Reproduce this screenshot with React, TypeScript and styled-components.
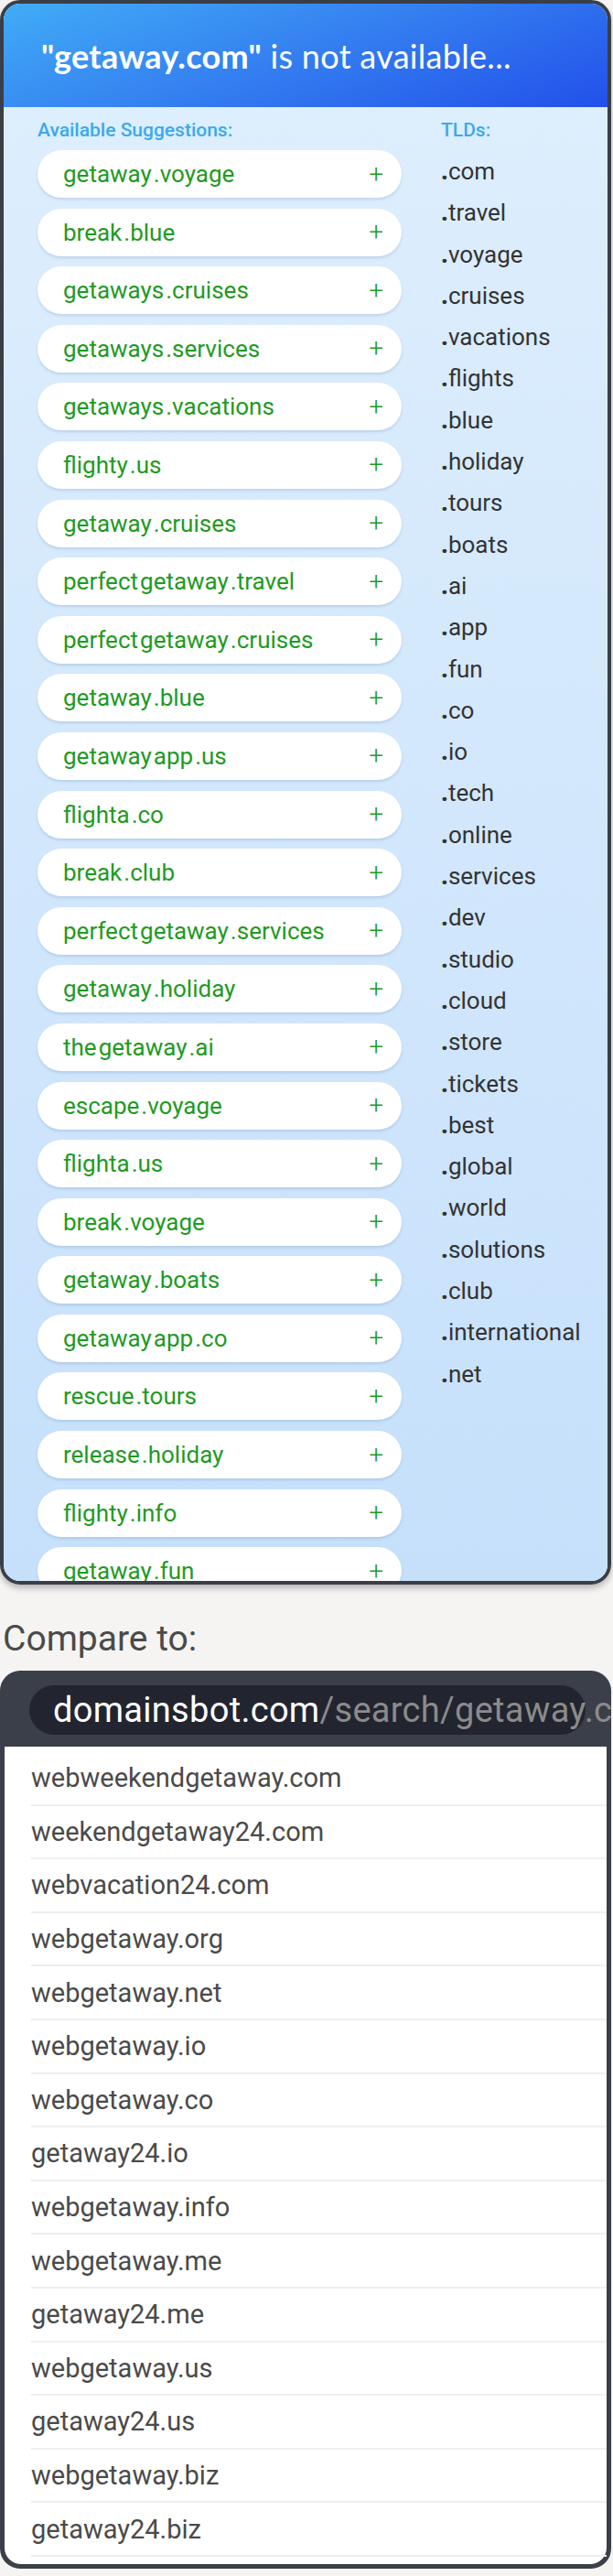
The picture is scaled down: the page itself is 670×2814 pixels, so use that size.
import React from 'react';
import styled, { createGlobalStyle } from 'styled-components';

const suggestions: string[][] = [
  ['getaway', '.voyage'],
  ['break', '.blue'],
  ['getaways', '.cruises'],
  ['getaways', '.services'],
  ['getaways', '.vacations'],
  ['flighty', '.us'],
  ['getaway', '.cruises'],
  ['perfect', 'getaway', '.travel'],
  ['perfect', 'getaway', '.cruises'],
  ['getaway', '.blue'],
  ['getaway', 'app', '.us'],
  ['flighta', '.co'],
  ['break', '.club'],
  ['perfect', 'getaway', '.services'],
  ['getaway', '.holiday'],
  ['the', 'getaway', '.ai'],
  ['escape', '.voyage'],
  ['flighta', '.us'],
  ['break', '.voyage'],
  ['getaway', '.boats'],
  ['getaway', 'app', '.co'],
  ['rescue', '.tours'],
  ['release', '.holiday'],
  ['flighty', '.info'],
  ['getaway', '.fun'],
];

const tlds = [
  'com', 'travel', 'voyage', 'cruises', 'vacations', 'flights', 'blue', 'holiday',
  'tours', 'boats', 'ai', 'app', 'fun', 'co', 'io', 'tech', 'online', 'services',
  'dev', 'studio', 'cloud', 'store', 'tickets', 'best', 'global', 'world',
  'solutions', 'club', 'international', 'net',
];

const competitors = [
  'webweekendgetaway.com',
  'weekendgetaway24.com',
  'webvacation24.com',
  'webgetaway.org',
  'webgetaway.net',
  'webgetaway.io',
  'webgetaway.co',
  'getaway24.io',
  'webgetaway.info',
  'webgetaway.me',
  'getaway24.me',
  'webgetaway.us',
  'getaway24.us',
  'webgetaway.biz',
  'getaway24.biz',
];

const GlobalStyle = createGlobalStyle`
  body {
    margin: 0;
    background: #f5f4f2;
    font-family: Roboto, 'Liberation Sans', sans-serif;
  }
`;

export default function App() {
  return (
    <>
      <GlobalStyle />
      <Page>
        <ResultCard>
          <Header>
            <HeaderTitle>
              <strong>"getaway.com"</strong> is not available...
            </HeaderTitle>
          </Header>
          <Body>
            <Column>
              <SectionLabel>Available Suggestions:</SectionLabel>
              <PillList>
                {suggestions.map((parts) => (
                  <Pill key={parts.join('')}>
                    <PillName>
                      {parts.map((p) => (
                        <span key={p}>{p}</span>
                      ))}
                    </PillName>
                    <Plus>+</Plus>
                  </Pill>
                ))}
              </PillList>
            </Column>
            <Column>
              <SectionLabel>TLDs:</SectionLabel>
              <TldList>
                {tlds.map((t) => (
                  <Tld key={t}>
                    <Dot>.</Dot>
                    {t}
                  </Tld>
                ))}
              </TldList>
            </Column>
          </Body>
        </ResultCard>

        <CompareTitle>Compare to:</CompareTitle>

        <BrowserCard>
          <AddressBar>
            <Host>domainsbot.com</Host>
            <PathPart>/search/getaway.com</PathPart>
          </AddressBar>
          <ResultList>
            {competitors.map((c) => (
              <ResultRow key={c}>{c}</ResultRow>
            ))}
          </ResultList>
        </BrowserCard>
      </Page>
    </>
  );
}

const Page = styled.div`
  width: 670px;
  padding-bottom: 6px;
`;

const ResultCard = styled.div`
  width: 668px;
  box-sizing: border-box;
  border: 4px solid #3a3f47;
  border-radius: 22px;
  overflow: hidden;
  box-shadow: 0 4px 6px rgba(0, 0, 0, 0.25);
`;

const Header = styled.div`
  height: 113px;
  display: flex;
  align-items: center;
  padding-left: 41px;
  background: linear-gradient(160deg, #41acf6 0%, #347ef0 50%, #2250ea 100%);
`;

const HeaderTitle = styled.div`
  color: #fff;
  font-family: Lato, 'Open Sans', sans-serif;
  font-size: 36px;
  font-weight: 400;
  letter-spacing: 0.3px;

  strong {
    font-weight: 700;
  }
`;

const Body = styled.div`
  height: 1610px;
  overflow: hidden;
  display: grid;
  grid-template-columns: 398px 1fr;
  column-gap: 43px;
  padding: 14px 0 0 37px;
  box-sizing: border-box;
  background: linear-gradient(180deg, #ddeefd 0%, #c6e0fb 100%);
`;

const Column = styled.div`
  display: flex;
  flex-direction: column;
`;

const SectionLabel = styled.div`
  color: #3aa9f0;
  font-size: 21px;
  font-weight: 500;
  line-height: 22px;
  margin-bottom: 11px;
`;

const PillList = styled.div`
  display: flex;
  flex-direction: column;
  gap: 11.6px;
`;

const Pill = styled.div`
  height: 52px;
  flex-shrink: 0;
  display: flex;
  align-items: center;
  justify-content: space-between;
  padding: 0 20px 0 28px;
  background: #fff;
  border-radius: 26px;
  box-shadow: 0 2px 3px rgba(60, 100, 150, 0.18);
  color: #1f9a1f;
`;

const PillName = styled.div`
  display: flex;
  gap: 2px;
  font-size: 26px;
`;

const Plus = styled.span`
  font-size: 28px;
  font-weight: 300;
`;

const TldList = styled.div`
  display: flex;
  flex-direction: column;
  padding-top: 1px;
`;

const Tld = styled.div`
  font-size: 26px;
  line-height: 45.3px;
  color: #333;
`;

const Dot = styled.span`
  font-weight: 900;
`;

const CompareTitle = styled.div`
  margin: 36px 0 12px 3px;
  font-size: 39px;
  line-height: 46px;
  color: #4a4a4a;
`;

const BrowserCard = styled.div`
  width: 668px;
  box-sizing: border-box;
  background: #3a3f4a;
  border-radius: 22px;
  overflow: hidden;
  padding: 16px 5px 5px 5px;
`;

const AddressBar = styled.div`
  width: 608px;
  height: 54px;
  margin: 0 0 13px 27px;
  padding-left: 26px;
  box-sizing: border-box;
  display: flex;
  align-items: center;
  background: #22252f;
  border-radius: 27px;
  white-space: nowrap;
  font-size: 38px;
  letter-spacing: 0.3px;
`;

const Host = styled.span`
  color: #fff;
`;

const PathPart = styled.span`
  color: #8b8b8b;
`;

const ResultList = styled.div`
  background: #fff;
  border-radius: 0 0 18px 18px;
  padding: 6px 0 8px 29px;
`;

const ResultRow = styled.div`
  height: 58.6px;
  box-sizing: border-box;
  display: flex;
  align-items: center;
  border-bottom: 2px solid #efefef;
  font-size: 29px;
  color: #4a4a4a;
`;
